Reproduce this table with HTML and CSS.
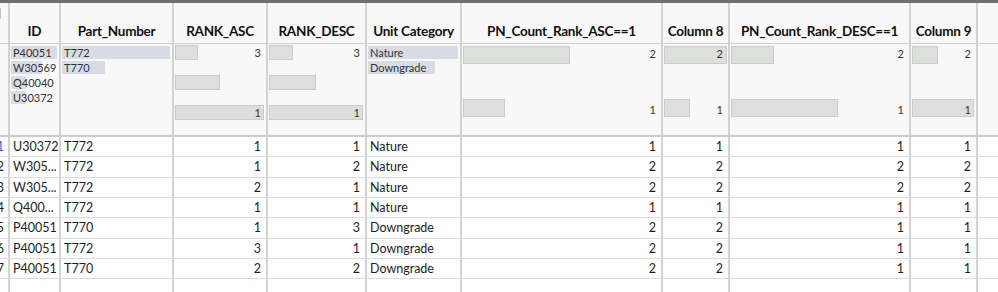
FILE: index.html
```html
<!DOCTYPE html>
<html>
<head>
<meta charset="utf-8">
<link rel="stylesheet" href="styles.css">
</head>
<body>
<div class="table">
  <div class="topbar"></div>
  <div class="row head">
    <div class="cell rn"><span class="corner"></span></div>
    <div class="cell">ID</div>
    <div class="cell">Part_Number</div>
    <div class="cell">RANK_ASC</div>
    <div class="cell">RANK_DESC</div>
    <div class="cell">Unit Category</div>
    <div class="cell">PN_Count_Rank_ASC==1</div>
    <div class="cell">Column 8</div>
    <div class="cell">PN_Count_Rank_DESC==1</div>
    <div class="cell">Column 9</div>
    <div class="cell rest"></div>
  </div>
  <div class="row summary">
    <div class="cell rn"></div>
    <div class="cell cat">
      <div class="citem"><span class="cbar" style="width:46px"></span><span class="clabel">P40051</span></div>
      <div class="citem"><span class="cbar" style="width:31px"></span><span class="clabel">W30569</span></div>
      <div class="citem"><span class="cbar" style="width:15px"></span><span class="clabel">Q40040</span></div>
      <div class="citem"><span class="cbar" style="width:15px"></span><span class="clabel">U30372</span></div>
    </div>
    <div class="cell cat">
      <div class="citem"><span class="cbar" style="width:108px"></span><span class="clabel">T772</span></div>
      <div class="citem"><span class="cbar" style="width:43px"></span><span class="clabel">T770</span></div>
    </div>
    <div class="cell num3">
      <div class="slot"><span class="nbar" style="width:23px"></span><span class="nlabel">3</span></div>
      <div class="slot"><span class="nbar" style="width:45px"></span></div>
      <div class="slot"><span class="nbar" style="width:89px"></span><span class="nlabel">1</span></div>
    </div>
    <div class="cell num3">
      <div class="slot"><span class="nbar" style="width:24px"></span><span class="nlabel">3</span></div>
      <div class="slot"><span class="nbar" style="width:47px"></span></div>
      <div class="slot"><span class="nbar" style="width:94px"></span><span class="nlabel">1</span></div>
    </div>
    <div class="cell cat">
      <div class="citem"><span class="cbar" style="width:90px"></span><span class="clabel">Nature</span></div>
      <div class="citem"><span class="cbar" style="width:67px"></span><span class="clabel">Downgrade</span></div>
    </div>
    <div class="cell num2">
      <div class="slot s1"><span class="nbar" style="width:107px"></span><span class="nlabel">2</span></div>
      <div class="slot s2"><span class="nbar" style="width:42px"></span><span class="nlabel">1</span></div>
    </div>
    <div class="cell num2">
      <div class="slot s1"><span class="nbar" style="width:63px"></span><span class="nlabel">2</span></div>
      <div class="slot s2"><span class="nbar" style="width:26px"></span><span class="nlabel">1</span></div>
    </div>
    <div class="cell num2">
      <div class="slot s1"><span class="nbar" style="width:43px"></span><span class="nlabel">2</span></div>
      <div class="slot s2"><span class="nbar" style="width:107px"></span><span class="nlabel">1</span></div>
    </div>
    <div class="cell num2">
      <div class="slot s1"><span class="nbar" style="width:26px"></span><span class="nlabel">2</span></div>
      <div class="slot s2"><span class="nbar" style="width:62px"></span><span class="nlabel">1</span></div>
    </div>
    <div class="cell rest"></div>
  </div>

  <div class="row data">
    <div class="cell rn sel">1</div><div class="cell">U30372</div><div class="cell">T772</div><div class="cell n">1</div><div class="cell n">1</div><div class="cell">Nature</div><div class="cell n">1</div><div class="cell n">1</div><div class="cell n">1</div><div class="cell n">1</div><div class="cell rest"></div>
  </div>
  <div class="row data">
    <div class="cell rn">2</div><div class="cell">W305...</div><div class="cell">T772</div><div class="cell n">1</div><div class="cell n">2</div><div class="cell">Nature</div><div class="cell n">2</div><div class="cell n">2</div><div class="cell n">2</div><div class="cell n">2</div><div class="cell rest"></div>
  </div>
  <div class="row data">
    <div class="cell rn">3</div><div class="cell">W305...</div><div class="cell">T772</div><div class="cell n">2</div><div class="cell n">1</div><div class="cell">Nature</div><div class="cell n">2</div><div class="cell n">2</div><div class="cell n">2</div><div class="cell n">2</div><div class="cell rest"></div>
  </div>
  <div class="row data">
    <div class="cell rn">4</div><div class="cell">Q400...</div><div class="cell">T772</div><div class="cell n">1</div><div class="cell n">1</div><div class="cell">Nature</div><div class="cell n">1</div><div class="cell n">1</div><div class="cell n">1</div><div class="cell n">1</div><div class="cell rest"></div>
  </div>
  <div class="row data">
    <div class="cell rn">5</div><div class="cell">P40051</div><div class="cell">T770</div><div class="cell n">1</div><div class="cell n">3</div><div class="cell">Downgrade</div><div class="cell n">2</div><div class="cell n">2</div><div class="cell n">1</div><div class="cell n">1</div><div class="cell rest"></div>
  </div>
  <div class="row data">
    <div class="cell rn">6</div><div class="cell">P40051</div><div class="cell">T772</div><div class="cell n">3</div><div class="cell n">1</div><div class="cell">Downgrade</div><div class="cell n">2</div><div class="cell n">2</div><div class="cell n">1</div><div class="cell n">1</div><div class="cell rest"></div>
  </div>
  <div class="row data">
    <div class="cell rn">7</div><div class="cell">P40051</div><div class="cell">T770</div><div class="cell n">2</div><div class="cell n">2</div><div class="cell">Downgrade</div><div class="cell n">2</div><div class="cell n">2</div><div class="cell n">1</div><div class="cell n">1</div><div class="cell rest"></div>
  </div>
  <div class="row data empty">
    <div class="cell rn"></div><div class="cell"></div><div class="cell"></div><div class="cell"></div><div class="cell"></div><div class="cell"></div><div class="cell"></div><div class="cell"></div><div class="cell"></div><div class="cell"></div><div class="cell rest"></div>
  </div>
</div>
</body>
</html>
```

FILE: styles.css
```css
html, body {
  margin: 0;
  padding: 0;
  background: #ffffff;
  overflow: hidden;
  height: 292px;
}
body {
  font-family: Lato, "Open Sans", sans-serif;
  color: #222;
}
.table {
  margin-left: -12px;
  width: 1012px;
}
.topbar {
  height: 3px;
  background: #6e6e6e;
}
.row {
  display: grid;
  box-sizing: border-box;
  grid-template-columns: 22px 51px 113px 94px 99px 95px 201px 67px 181px 67px 1fr;
}
.cell {
  box-sizing: border-box;
  border-right: 2px solid #d2d2d2;
  min-width: 0;
  overflow: hidden;
  white-space: nowrap;
}
.rest { border-right: none; }

.head {
  height: 41px;
  background: #f8f8f8;
  border-bottom: 1px solid #cfcfcf;
}
.head .cell {
  font-weight: 700;
  font-size: 13.5px;
  color: #111;
  display: flex;
  align-items: flex-end;
  justify-content: center;
  padding-bottom: 4px;
  letter-spacing: -0.25px;
}
.head .rn {
  align-items: flex-start;
  justify-content: flex-end;
  padding: 5px 0 0 0;
}
.corner {
  display: block;
  width: 9px;
  height: 9px;
  border: 1px solid #c4c4c4;
  margin-right: 7px;
}

.summary {
  height: 93px;
  background: #f8f8f8;
  border-bottom: 2px solid #cdcdcd;
}
.summary .cell {
  font-size: 11px;
  color: #333;
}
.cat {
  display: flex;
  flex-direction: column;
  padding: 2px 0 0 1px;
}
.citem {
  display: grid;
  height: 14px;
  margin-bottom: 1px;
}
.cbar, .clabel {
  grid-area: 1 / 1;
}
.cbar {
  height: 13px;
  background: #d8dce5;
}
.clabel {
  line-height: 13px;
  padding-left: 2px;
}
.num3, .num2 {
  display: flex;
  flex-direction: column;
  padding: 1px 0 0 1px;
}
.slot {
  display: grid;
}
.nbar, .nlabel {
  grid-area: 1 / 1;
}
.nbar {
  box-sizing: border-box;
  background: #dcdfdb;
  border: 1px solid #c9ccc8;
}
.nlabel {
  justify-self: end;
  padding-right: 5px;
  line-height: 13px;
}
.num3 .slot {
  height: 15px;
  margin-bottom: 15px;
}
.num3 .nlabel {
  align-self: center;
}
.num2 .slot {
  height: 18px;
}
.num2 .s1 { margin-top: 1px; margin-bottom: 35px; }
.num2 .s1 .nlabel { align-self: start; padding-top: 1px; }
.num2 .s2 .nlabel { align-self: end; padding-bottom: 1px; }

.data {
  height: 20.33px;
  border-bottom: 1px solid #dadae2;
}
.data .cell {
  font-size: 12.5px;
  line-height: 19px;
  padding-left: 3px;
  color: #1e1e1e;
}
.data .n {
  text-align: right;
  padding-right: 5px;
}
.data .rn {
  text-align: right;
  padding: 0 4px 0 0;
}
.data .rn.sel { color: #2a62c9; }
.data.empty { border-bottom: none; height: 20px; }
```
